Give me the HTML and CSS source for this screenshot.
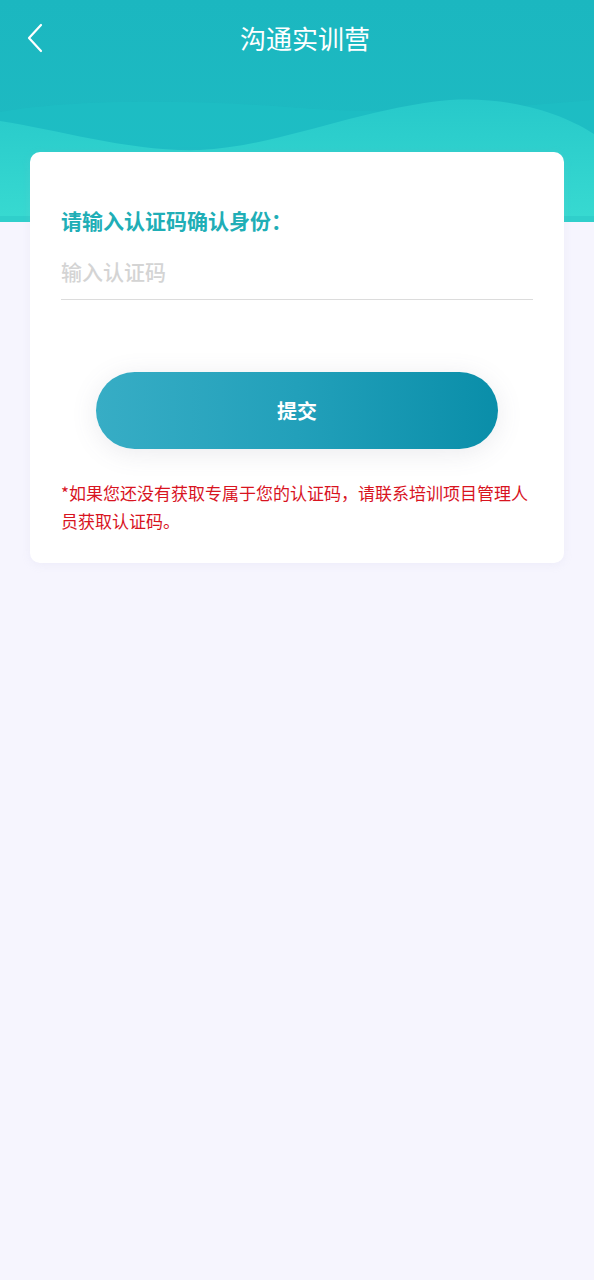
FILE: index.html
```html
<!DOCTYPE html>
<html lang="zh">
<head>
<meta charset="utf-8">
<title>沟通实训营</title>
<link rel="stylesheet" href="styles.css">
</head>
<body>
<div class="page">
  <svg class="header-bg" width="594" height="222" viewBox="0 0 594 222" preserveAspectRatio="none" aria-hidden="true">
    <defs>
      <linearGradient id="top" x1="0" y1="0" x2="0" y2="1">
        <stop offset="0" stop-color="#1bb7c0"/>
        <stop offset="1" stop-color="#1fbcc3"/>
      </linearGradient>
      <linearGradient id="low" x1="0" y1="0" x2="0" y2="1">
        <stop offset="0" stop-color="#27c9ca"/>
        <stop offset="1" stop-color="#38dad1"/>
      </linearGradient>
    </defs>
    <rect width="594" height="222" fill="url(#top)"/>
    <path d="M0 112 C 80 98, 200 100, 300 108 C 400 116, 500 108, 594 100 L594 222 L0 222 Z" fill="#1ec0c5" opacity="0.6"/>
    <path d="M0 121 C 60 130, 130 152, 200 150 C 280 146, 360 108, 450 100 C 520 96, 570 118, 594 134 L594 222 L0 222 Z" fill="url(#low)"/>
    <rect y="216" width="594" height="6" fill="#30cfcb"/>
  </svg>

  <header class="navbar">
    <button class="back" type="button" aria-label="返回">
      <svg width="18" height="30" viewBox="0 0 18 30"><path d="M15 2 L3 15 L15 28" fill="none" stroke="#fff" stroke-width="2.2" stroke-linecap="round" stroke-linejoin="round"/></svg>
    </button>
    <h1 class="title">沟通实训营</h1>
  </header>

  <main class="card">
    <label class="label" for="code">请输入认证码确认身份：</label>
    <div class="field">
      <input id="code" class="input" type="text" placeholder="输入认证码">
    </div>
    <button class="submit" type="button">提交</button>
    <p class="note">*如果您还没有获取专属于您的认证码，请联系培训项目管理人员获取认证码。</p>
  </main>
</div>
</body>
</html>
```

FILE: styles.css
```css
html, body {
  margin: 0;
  padding: 0;
}
body {
  background: #f6f5fe;
  font-family: "Noto Sans CJK SC", "Noto Sans", sans-serif;
  width: 594px;
  min-height: 1280px;
}
.page {
  position: relative;
  min-height: 1280px;
}
.header-bg {
  position: absolute;
  left: 0;
  top: 0;
  display: block;
  z-index: 0;
}
.navbar {
  position: relative;
  z-index: 1;
  height: 76px;
  display: flex;
  align-items: center;
  justify-content: center;
}
.back {
  position: absolute;
  left: 24px;
  top: 23px;
  width: 22px;
  height: 30px;
  padding: 0;
  border: 0;
  background: none;
  display: flex;
  align-items: center;
  justify-content: center;
}
.title {
  margin: 0;
  font-size: 26px;
  font-weight: 400;
  color: #ffffff;
  line-height: 36px;
  padding-left: 16px;
}
.card {
  position: relative;
  z-index: 1;
  margin: 76px 30px 0;
  background: #ffffff;
  border-radius: 10px;
  padding: 54px 31px 28px;
  display: flex;
  flex-direction: column;
  box-shadow: 0 2px 10px rgba(180, 180, 210, 0.12);
}
.label {
  font-size: 21px;
  line-height: 28px;
  font-weight: 700;
  color: #20aeb6;
}
.field {
  margin-top: 16px;
  padding: 7px 0 14px;
  border-bottom: 1px solid #dcdcdc;
}
.input {
  display: block;
  width: 100%;
  border: 0;
  outline: none;
  padding: 0;
  margin: 0;
  font-family: inherit;
  font-size: 21px;
  line-height: 28px;
  height: 28px;
  font-weight: 500;
  color: #333;
  background: transparent;
}
.input::placeholder {
  color: #d4d4d4;
}
.submit {
  margin: 72px 35px 0;
  height: 77px;
  border: 0;
  border-radius: 39px;
  background: linear-gradient(90deg, #37adc5 0%, #22a0ba 50%, #0a8ea9 100%);
  color: #ffffff;
  font-family: inherit;
  font-size: 20px;
  font-weight: 700;
  box-shadow: 0 4px 26px rgba(100, 100, 120, 0.13);
}
.note {
  margin: 30px 0 0;
  font-size: 17px;
  line-height: 28px;
  color: #d8141f;
}
```
